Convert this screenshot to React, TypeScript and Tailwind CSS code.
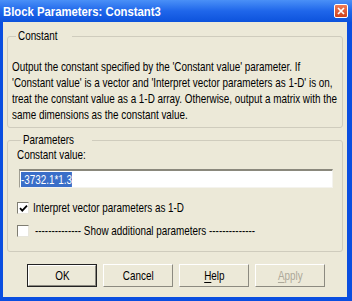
import React from "react";

const font = { fontFamily: '"Liberation Sans", Arial, sans-serif' };

function T({ children, className = "" }: { children: React.ReactNode; className?: string }) {
  return (
    <span className={"inline-block origin-left scale-x-[0.76] whitespace-nowrap " + className}>
      {children}
    </span>
  );
}

function Check({ checked }: { checked?: boolean }) {
  return (
    <div className="shrink-0 w-[12px] h-[12px] border border-t-[#7f7d72] border-l-[#7f7d72] border-r-[#e8e6dc] border-b-[#e8e6dc] bg-white flex items-center justify-center">
      {checked && (
        <svg width="9" height="9" viewBox="0 0 9 9">
          <path d="M1 4.2 L3.3 6.6 L8 1.6" stroke="#000" strokeWidth="1.8" fill="none" />
        </svg>
      )}
    </div>
  );
}

function Btn({ label, underline, isDefault, disabled }: { label: string; underline?: number; isDefault?: boolean; disabled?: boolean }) {
  const chars = label.split("").map((c, i) =>
    i === underline ? (
      <span key={i} className="underline underline-offset-2">{c}</span>
    ) : (
      <span key={i}>{c}</span>
    )
  );
  return (
    <div className={"w-[70px] h-[23px] " + (isDefault ? "border border-[#222]" : "")}>
      <div className="w-full h-full border border-t-white border-l-white border-r-[#8c8a80] border-b-[#8c8a80] bg-[#ece9d8] flex items-center justify-center">
        <span className={"inline-block origin-center scale-x-[0.76] text-[13px] leading-[15px] " + (disabled ? "text-[#aca899]" : "text-black")}>
          {chars}
        </span>
      </div>
    </div>
  );
}

export default function App() {
  return (
    <div style={font} className="w-[352px] h-[301px] bg-[#0a4ee0] flex flex-col overflow-hidden">
      <div className="h-[22px] shrink-0 bg-gradient-to-b from-[#4a90f7] via-[#1f66ea] to-[#0c52dc] flex items-center pl-[3px] pr-[4px]">
        <span className="inline-block origin-left scale-x-[0.87] whitespace-nowrap text-white font-bold text-[13px] leading-[15px] mt-[1px]">
          Block Parameters: Constant3
        </span>
        <div className="ml-auto w-[14px] h-[14px] rounded-[2px] border border-white bg-gradient-to-b from-[#ef7a55] to-[#d0401a] flex items-center justify-center">
          <svg width="8" height="8" viewBox="0 0 8 8">
            <path d="M1 1 L7 7 M7 1 L1 7" stroke="#fff" strokeWidth="1.7" />
          </svg>
        </div>
      </div>
      <div className="flex-1 min-h-0 ml-[3px] mr-[5px] mb-[4px] bg-[#ece9d8] flex flex-col px-[4px] pt-[7px] text-[13px] leading-[15px] text-black">
        <fieldset className="min-w-0 border border-[#cfccbd] rounded-[3px] pl-[4px] pr-[4px] pt-[16px] pb-[4px]">
          <legend className="ml-[4px] px-[2px] leading-[14px]">
            <T>Constant</T>
          </legend>
          <div className="flex flex-col min-w-0 leading-[16px]">
            <T>Output the constant specified by the 'Constant value' parameter. If</T>
            <T>'Constant value' is a vector and 'Interpret vector parameters as 1-D' is on,</T>
            <T>treat the constant value as a 1-D array. Otherwise, output a matrix with the</T>
            <T>same dimensions as the constant value.</T>
          </div>
        </fieldset>
        <fieldset className="min-w-0 mt-[5px] border border-[#cfccbd] rounded-[3px] pl-[9px] pr-[9px] pt-[1px] pb-[13px]">
          <legend className="ml-[4px] px-[2px] leading-[14px]">
            <T>Parameters</T>
          </legend>
          <div className="leading-[14px]">
            <T>Constant value:</T>
          </div>
          <div className="mt-[7px] ml-[2px] h-[19px] bg-white border-t-2 border-l border-t-[#8a887c] border-l-[#a09e92] border-r border-b border-r-[#f4f3ee] border-b-[#f4f3ee] flex items-center pl-[1px] overflow-hidden">
            <span className="inline-block origin-left scale-x-[0.76] whitespace-nowrap bg-[#3a6ec8] text-white leading-[15px]">
              -3732.1*1.3
            </span>
          </div>
          <div className="mt-[13px] flex items-center h-[14px]">
            <Check checked />
            <span className="ml-[4px] leading-[14px]">
              <T>Interpret vector parameters as 1-D</T>
            </span>
          </div>
          <div className="mt-[9px] flex items-center h-[14px]">
            <Check />
            <span className="ml-[6px] leading-[14px]">
              <T>-------------- Show additional parameters --------------</T>
            </span>
          </div>
        </fieldset>
        <div className="mt-[12px] flex gap-[6px] pl-[20px]">
          <Btn label="OK" isDefault />
          <Btn label="Cancel" />
          <Btn label="Help" underline={0} />
          <Btn label="Apply" underline={0} disabled />
        </div>
      </div>
    </div>
  );
}
